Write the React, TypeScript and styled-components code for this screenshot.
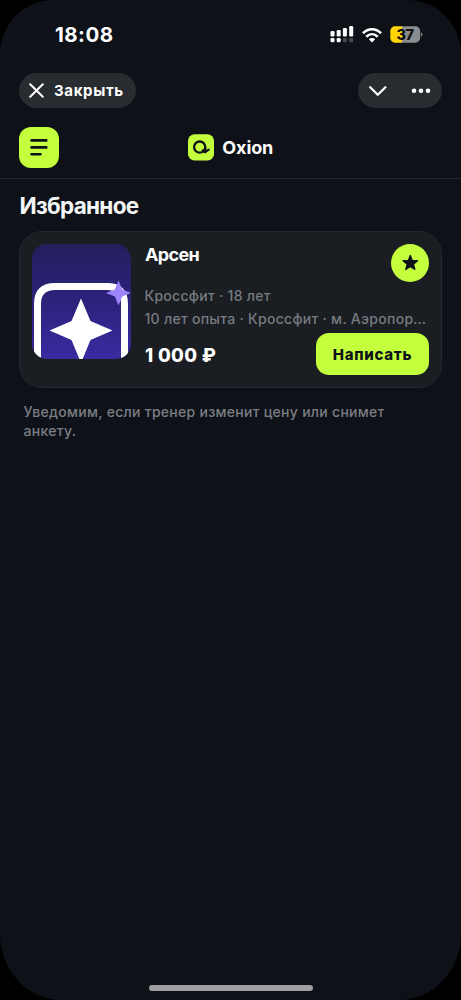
import React from "react";
import styled, { createGlobalStyle } from "styled-components";

const LIME = "#c3ff3d";
const INK = "#0e1218";

const GlobalStyle = createGlobalStyle`
  * { box-sizing: border-box; }
  body { margin: 0; background: #000; font-family: Inter, "Liberation Sans", sans-serif; }
  button { font: inherit; border: 0; padding: 0; margin: 0; color: inherit; }
  svg { display: block; flex: none; }
`;

const Screen = styled.main`
  width: 461px;
  height: 1000px;
  display: flex;
  flex-direction: column;
  overflow: hidden;
  background: #0e1218;
  color: #fff;
  border-radius: 54px 54px 62px 62px / 54px 54px 66px 66px;
`;

const StatusBar = styled.div`
  height: 73px;
  padding: 22px 38px 0 55px;
  display: flex;
  justify-content: space-between;
  align-items: flex-start;
`;

const Clock = styled.time`
  font-size: 20.5px;
  font-weight: 700;
  line-height: 25px;
  letter-spacing: 0.45px;
`;

const StatusIcons = styled.div`
  display: flex;
  align-items: center;
  padding-top: 4px;
  gap: 8px;
`;

const ChatBar = styled.nav`
  display: flex;
  justify-content: space-between;
  padding: 0 19px;
  height: 35px;
`;

const Pill = styled.div<{ $width: number }>`
  width: ${(p) => p.$width}px;
  height: 35px;
  border-radius: 18px;
  background: #282b2f;
  display: flex;
  align-items: center;
`;

const CloseButton = styled(Pill).attrs({ as: "button" })`
  padding-left: 10px;
  gap: 10px;
  font-size: 15px;
  font-weight: 700;
  letter-spacing: 0.65px;
`;

const MenuPill = styled(Pill)`
  padding: 0 11px;
  justify-content: space-between;
`;

const Header = styled.header`
  height: 71px;
  padding: 19px 19px 0;
  border-bottom: 1px solid #24272c;
  display: grid;
  grid-template-columns: 40px 1fr 40px;
`;

const MenuButton = styled.button`
  width: 40px;
  height: 41px;
  border-radius: 12px;
  background: ${LIME};
`;

const Brand = styled.div`
  display: flex;
  height: 41px;
  align-items: center;
  justify-content: center;
  gap: 8.5px;
`;

const BrandName = styled.span`
  font-size: 18px;
  font-weight: 700;
  letter-spacing: -0.1px;
`;

const Title = styled.h1`
  margin: 13px 0 0 19.5px;
  font-size: 22.5px;
  line-height: 28px;
  font-weight: 700;
  letter-spacing: -0.7px;
  color: #f4f5f6;
`;

const Card = styled.article`
  margin: 11px 19px 0;
  height: 157px;
  padding: 12px 12px 0;
  border: 1px solid #24272b;
  border-radius: 23px;
  background: #1a1d22;
  display: grid;
  grid-template-columns: 99px 1fr;
  column-gap: 14px;
`;

const Photo = styled.div`
  width: 99px;
  height: 115px;
  border-radius: 15px;
  overflow: hidden;
`;

const Details = styled.div`
  min-width: 0;
  display: flex;
  flex-direction: column;
`;

const CardTop = styled.div`
  display: flex;
  justify-content: space-between;
  height: 40px;
`;

const Name = styled.h2`
  margin: 0;
  font-size: 18px;
  line-height: 21px;
  font-weight: 700;
  letter-spacing: -0.65px;
`;

const StarButton = styled.button`
  width: 38px;
  height: 38px;
  border-radius: 50%;
  background: ${LIME};
  color: ${INK};
  display: grid;
  place-items: center;
`;

const Meta = styled.p`
  margin: 0 0 0 -0.5px;
  font-size: 14px;
  line-height: 23px;
  font-weight: 500;
  letter-spacing: 0.29px;
  color: #787b80;
  white-space: nowrap;
`;

const CardBottom = styled.div`
  height: 42px;
  margin-top: 3px;
  display: flex;
  justify-content: space-between;
  align-items: center;
`;

const Price = styled.strong`
  font-size: 18.5px;
  font-weight: 800;
  letter-spacing: 0.35px;
  padding-top: 1px;
`;

const WriteButton = styled.button`
  width: 113px;
  height: 42px;
  border-radius: 13px;
  background: ${LIME};
  color: ${INK};
  font-size: 15px;
  font-weight: 800;
  letter-spacing: 0.7px;
`;

const Note = styled.p`
  margin: 14px 24px 0 23.5px;
  width: 390px;
  font-size: 14px;
  line-height: 19px;
  font-weight: 500;
  letter-spacing: 0.28px;
  color: #7b7e83;
`;

const HomeIndicator = styled.div`
  width: 164px;
  height: 6px;
  border-radius: 3px;
  margin: auto auto 9px;
  background: #a0a0a2;
`;

const SignalIcon = () => (
  <svg width="24" height="17" viewBox="0 0 24 17" fill="#fff">
    <rect x="0.5" y="5" width="4" height="5.5" rx="1.3" />
    <rect x="6.7" y="4" width="4" height="6.5" rx="1.3" />
    <rect x="12.9" y="2" width="4" height="8.5" rx="1.3" />
    <rect x="19.2" y="0" width="4" height="10.5" rx="1.3" />
    <rect x="0.5" y="12" width="4" height="4.3" rx="1.3" />
    <rect x="6.7" y="12" width="4" height="4.3" rx="1.3" />
    <rect x="12.9" y="12" width="4" height="4.3" rx="1.3" fill="#45484c" />
    <rect x="19.2" y="12" width="4" height="4.3" rx="1.3" fill="#45484c" />
  </svg>
);

const WifiIcon = () => (
  <svg width="20" height="16" viewBox="0 0 20 16" fill="none" stroke="#fff" strokeWidth="2.7">
    <path d="M1 6.2C6.2 .9 13.8 .9 19 6.2" />
    <path d="M4.3 9.7c3.4-3.3 8-3.3 11.4 0" />
    <path d="M6.8 12.2c1.9-1.7 4.5-1.7 6.4 0L10 15.5z" fill="#fff" stroke="none" />
  </svg>
);

const BatteryIcon = () => (
  <svg width="33" height="17" viewBox="0 0 33 17">
    <path d="M5 .3h7v16.4H5A4.7 4.7 0 0 1 .3 12V5A4.7 4.7 0 0 1 5 .3z" fill="#ffd60a" />
    <path d="M12 .3h13.5A4.7 4.7 0 0 1 30.2 5v7a4.7 4.7 0 0 1-4.7 4.7H12z" fill="#8b8c8f" />
    <path d="M31.1 6.2c1.9 1 1.9 3.6 0 4.6z" fill="#8b8c8f" />
    <text x="15" y="13.6" textAnchor="middle" fontFamily="Inter" fontSize="14.5" fontWeight="800" letterSpacing="-0.4" fill="#11110f">37</text>
  </svg>
);

const CloseIcon = () => (
  <svg width="15" height="15" viewBox="0 0 15 15" fill="none" stroke="#fff" strokeWidth="2" strokeLinecap="round">
    <path d="M1.2 1.2 13.8 13.8M13.8 1.2 1.2 13.8" />
  </svg>
);

const ChevronIcon = () => (
  <svg width="18" height="12" viewBox="0 0 18 12" fill="none" stroke="#fff" strokeWidth="2.3" strokeLinecap="round" strokeLinejoin="round">
    <path d="m1.2 2.3 7.6 7.5 7.6-7.5" />
  </svg>
);

const DotsIcon = () => (
  <svg width="20" height="6" viewBox="0 0 20 6" fill="#fff">
    <circle cx="3" cy="2.8" r="2.3" />
    <circle cx="10" cy="2.8" r="2.3" />
    <circle cx="17" cy="2.8" r="2.3" />
  </svg>
);

const LinesIcon = () => (
  <svg width="40" height="41" viewBox="0 0 40 41" fill="none" stroke={INK} strokeWidth="2.6" strokeLinecap="round">
    <path d="M12.5 13.4h14.8M12.5 20.4h14.8M12.5 27.3h9" />
  </svg>
);

const BrandMark = () => (
  <svg width="26" height="27" viewBox="0 0 26 27" fill="none">
    <rect y=".3" width="26" height="26.2" rx="6.5" fill={LIME} />
    <circle cx="11.7" cy="13.1" r="5.6" stroke={INK} strokeWidth="2.3" />
    <path d="M17.2 13.2v4.9l3.5-2.5" stroke={INK} strokeWidth="2.3" strokeLinecap="round" strokeLinejoin="round" />
    <path d="m14.6 16.2 2.2 2.2" stroke={INK} strokeWidth="2" strokeLinecap="round" />
  </svg>
);

const StarIcon = () => (
  <svg width="18" height="18" viewBox="0 0 18 18" fill="currentColor" stroke="currentColor" strokeWidth="1.4" strokeLinejoin="round">
    <path d="m9.3 1.4 1.9 5 5.3.3-4.1 3.4 1.4 5.3-4.5-2.9-4.5 2.9 1.4-5.3L2.1 6.7l5.3-.3z" />
  </svg>
);

const Artwork = () => (
  <svg width="99" height="115" viewBox="0 0 99 115">
    <defs>
      <linearGradient id="night" x1="0" y1="0" x2="0" y2="1">
        <stop offset="0" stopColor="#251e5c" />
        <stop offset="0.5" stopColor="#2b237c" />
        <stop offset="1" stopColor="#382ba0" />
      </linearGradient>
    </defs>
    <rect width="99" height="115" fill="url(#night)" />
    <path d="M5.5 119V60Q5.5 42.5 23 42.5H75Q92.5 42.5 92.5 60V119" fill="none" stroke="#fff" strokeWidth="7" />
    <path d="M49 54.5 58.5 77 80.5 86.5 58.5 96 49 119 39.5 96 17.5 86.5 39.5 77z" fill="#fff" />
    <path d="M86.5 36.5 90.2 45.5 99 49 90.2 52.5 86.5 61.5 82.8 52.5 74 49 82.8 45.5z" fill="#9d84fa" />
  </svg>
);

export default function App() {
  return (
    <>
      <GlobalStyle />
      <Screen>
        <StatusBar>
          <Clock>18:08</Clock>
          <StatusIcons>
            <SignalIcon />
            <WifiIcon />
            <BatteryIcon />
          </StatusIcons>
        </StatusBar>
        <ChatBar>
          <CloseButton $width={117}>
            <CloseIcon />
            Закрыть
          </CloseButton>
          <MenuPill $width={84}>
            <ChevronIcon />
            <DotsIcon />
          </MenuPill>
        </ChatBar>
        <Header>
          <MenuButton aria-label="Меню">
            <LinesIcon />
          </MenuButton>
          <Brand>
            <BrandMark />
            <BrandName>Oxion</BrandName>
          </Brand>
        </Header>
        <Title>Избранное</Title>
        <Card>
          <Photo>
            <Artwork />
          </Photo>
          <Details>
            <CardTop>
              <Name>Арсен</Name>
              <StarButton aria-label="В избранном">
                <StarIcon />
              </StarButton>
            </CardTop>
            <Meta>Кроссфит · 18 лет</Meta>
            <Meta>10 лет опыта · Кроссфит · м. Аэропор…</Meta>
            <CardBottom>
              <Price>1 000 ₽</Price>
              <WriteButton>Написать</WriteButton>
            </CardBottom>
          </Details>
        </Card>
        <Note>Уведомим, если тренер изменит цену или снимет анкету.</Note>
        <HomeIndicator />
      </Screen>
    </>
  );
}
